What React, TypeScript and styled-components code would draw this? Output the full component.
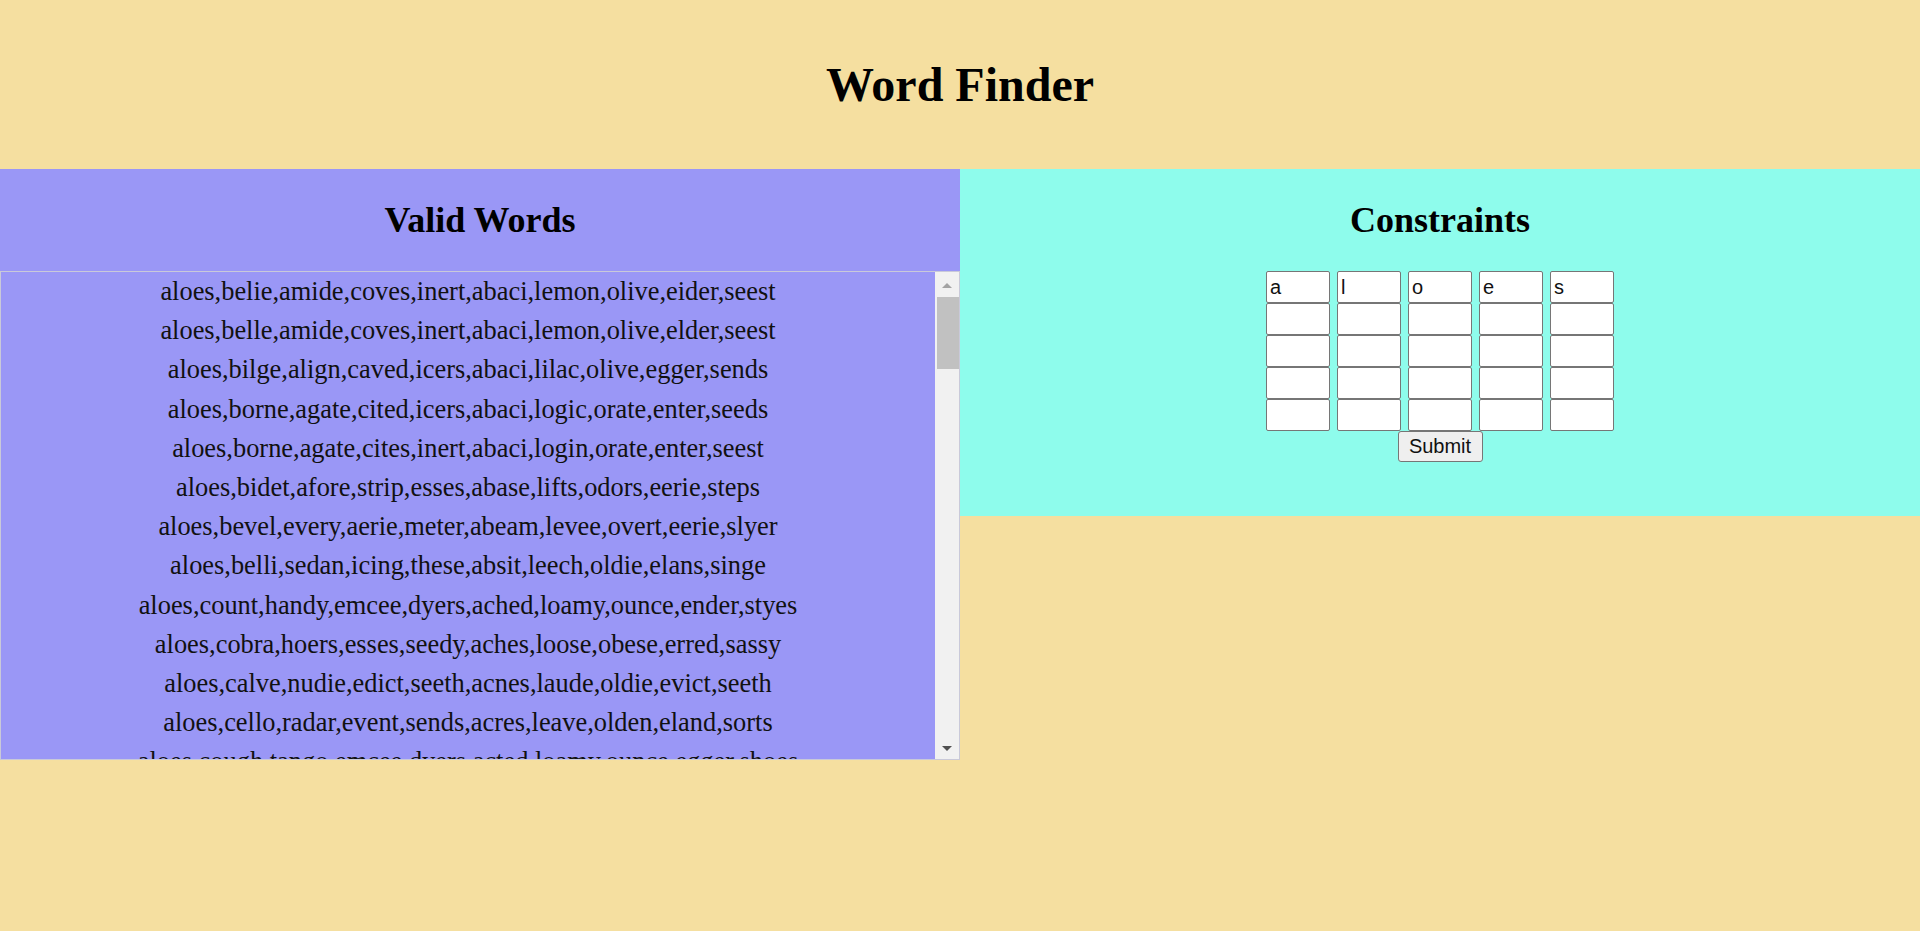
import React from "react";
import styled, { createGlobalStyle } from "styled-components";

const GlobalStyle = createGlobalStyle`
  html, body {
    margin: 0;
    padding: 0;
    background: #f5dfa0;
  }
  body {
    min-height: 931px;
    font-family: "Liberation Serif", "Times New Roman", serif;
  }
`;

const Page = styled.div`
  width: 1920px;
  display: flex;
  flex-direction: column;
`;

const Header = styled.header`
  height: 169px;
  display: flex;
  align-items: center;
  justify-content: center;
`;

const Title = styled.h1`
  margin: 0;
  font-family: "Liberation Serif", "Times New Roman", serif;
  font-size: 48px;
  font-weight: bold;
  color: #000;
`;

const Columns = styled.main`
  display: flex;
  align-items: flex-start;
`;

const Panel = styled.section<{ $bg: string; $pad?: number }>`
  flex: 0 0 50%;
  background: ${(p) => p.$bg};
  display: flex;
  flex-direction: column;
  align-items: center;
  padding-bottom: ${(p) => p.$pad ?? 0}px;
`;

const PanelHeading = styled.h2`
  margin: 0;
  height: 102px;
  width: 100%;
  display: flex;
  align-items: center;
  justify-content: center;
  font-family: "Liberation Serif", "Times New Roman", serif;
  font-size: 36px;
  font-weight: bold;
  color: #000;
`;

const WordBox = styled.div`
  box-sizing: border-box;
  width: 100%;
  height: 489px;
  border: 1px solid #c9c9d9;
  background: #9a97f6;
  display: flex;
`;

const WordList = styled.div`
  flex: 1;
  overflow-y: auto;
  scrollbar-width: none;
  font-family: "Liberation Serif", "Times New Roman", serif;
  font-size: 26.4px;
  line-height: 39.2px;
  color: #111;
  text-align: center;
  &::-webkit-scrollbar {
    display: none;
  }
`;

const WordLine = styled.div`
  white-space: nowrap;
`;

const ScrollTrack = styled.div`
  flex: 0 0 24px;
  background: #f1f1f1;
  display: flex;
  flex-direction: column;
`;

const ArrowButton = styled.div`
  height: 25px;
  display: flex;
  align-items: center;
  justify-content: center;
`;

const Arrow = styled.div<{ $down?: boolean }>`
  width: 0;
  height: 0;
  border-left: 5.5px solid transparent;
  border-right: 5.5px solid transparent;
  ${(p) =>
    p.$down
      ? "border-top: 5px solid #505050; margin-top: 3px;"
      : "border-bottom: 5px solid #a3a3a3; margin-top: 1px;"}
`;

const Thumb = styled.div`
  height: 72px;
  margin-left: 2px;
  background: #c1c1c1;
`;

const TrackSpace = styled.div`
  flex: 1;
`;

const Grid = styled.div`
  display: grid;
  grid-template-columns: repeat(5, 64px);
  grid-auto-rows: 32px;
  column-gap: 7px;
`;

const LetterInput = styled.input`
  box-sizing: border-box;
  width: 64px;
  height: 32px;
  margin: 0;
  padding: 1px 3px;
  border: 1px solid #767676;
  border-radius: 2px;
  background: #fff;
  font-family: "Liberation Sans", Arial, sans-serif;
  font-size: 20px;
  color: #111;
  outline: none;
`;

const SubmitButton = styled.button`
  box-sizing: border-box;
  width: 85px;
  height: 31px;
  margin: 0;
  padding: 0 6px;
  border: 1px solid #767676;
  border-radius: 3px;
  background: #efefef;
  font-family: "Liberation Sans", Arial, sans-serif;
  font-size: 20px;
  color: #111;
  cursor: pointer;
`;

const fixed = [
  "aloes,belie,amide,coves,inert,abaci,lemon,olive,eider,seest",
  "aloes,belle,amide,coves,inert,abaci,lemon,olive,elder,seest",
  "aloes,bilge,align,caved,icers,abaci,lilac,olive,egger,sends",
  "aloes,borne,agate,cited,icers,abaci,logic,orate,enter,seeds",
  "aloes,borne,agate,cites,inert,abaci,login,orate,enter,seest",
  "aloes,bidet,afore,strip,esses,abase,lifts,odors,eerie,steps",
  "aloes,bevel,every,aerie,meter,abeam,levee,overt,eerie,slyer",
  "aloes,belli,sedan,icing,these,absit,leech,oldie,elans,singe",
  "aloes,count,handy,emcee,dyers,ached,loamy,ounce,ender,styes",
  "aloes,cobra,hoers,esses,seedy,aches,loose,obese,erred,sassy",
  "aloes,calve,nudie,edict,seeth,acnes,laude,oldie,evict,seeth",
  "aloes,cello,radar,event,sends,acres,leave,olden,eland,sorts",
  "aloes,cough,tango,emcee,dyers,acted,loamy,ounce,egger,shoes",
];

const pool = [
  ["bathe", "cider", "delta", "elite", "fable", "gavel", "hinge", "idler", "joker", "kneel"],
  ["amber", "arena", "ember", "opera", "irate", "usher", "oasis", "avert", "ideal", "ozone"],
  ["ounce", "otter", "eaten", "adder", "emcee", "alter", "ester", "ashen", "inter", "oiled"],
  ["eager", "sever", "tiger", "caper", "inner", "liner", "miner", "rider", "sower", "tuner"],
  ["aback", "abate", "abbot", "abide", "abler", "abode", "about", "above", "abuse", "abyss"],
  ["ledge", "lemur", "lance", "latte", "lathe", "lever", "light", "limbo", "lodge", "lunar"],
  ["ovens", "oxide", "owner", "outer", "oaken", "ocean", "offer", "often", "orbit", "order"],
  ["elude", "enact", "endow", "enemy", "enjoy", "ensue", "entry", "equal", "erase", "essay"],
  ["sates", "sedge", "shied", "sides", "sires", "skies", "sleds", "snobs", "spies", "stems"],
];

const words: string[] = [...fixed];
for (let i = 0; i < 62; i++) {
  const parts = ["aloes"];
  for (let j = 0; j < 9; j++) {
    const col = pool[j];
    parts.push(col[(i * (j + 3) + j * 7 + Math.floor(i / 4)) % col.length]);
  }
  words.push(parts.join(","));
}

const firstRow = ["a", "l", "o", "e", "s"];

export default function App() {
  return (
    <>
      <GlobalStyle />
      <Page>
        <Header>
          <Title>Word Finder</Title>
        </Header>
        <Columns>
          <Panel $bg="#9a97f6">
            <PanelHeading>Valid Words</PanelHeading>
            <WordBox>
              <WordList>
                {words.map((w, i) => (
                  <WordLine key={i}>{w}</WordLine>
                ))}
              </WordList>
              <ScrollTrack aria-hidden="true">
                <ArrowButton>
                  <Arrow />
                </ArrowButton>
                <Thumb />
                <TrackSpace />
                <ArrowButton>
                  <Arrow $down />
                </ArrowButton>
              </ScrollTrack>
            </WordBox>
          </Panel>
          <Panel $bg="#8efcec" $pad={54}>
            <PanelHeading>Constraints</PanelHeading>
            <Grid>
              {Array.from({ length: 25 }).map((_, i) => (
                <LetterInput
                  key={i}
                  type="text"
                  defaultValue={i < 5 ? firstRow[i] : ""}
                />
              ))}
            </Grid>
            <SubmitButton type="button">Submit</SubmitButton>
          </Panel>
        </Columns>
      </Page>
    </>
  );
}
